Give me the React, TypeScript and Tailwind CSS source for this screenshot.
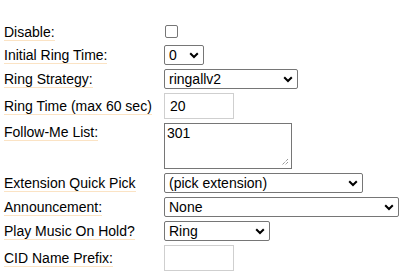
import type { ReactNode } from "react";

type RowProps = {
  label: string;
  top?: boolean;
  children: ReactNode;
};

function Row({ label, top = false, children }: RowProps) {
  return (
    <div className={top ? "flex items-start" : "flex items-center"}>
      <div className={top ? "w-[160px] shrink-0 pl-1 pt-[1px] leading-4" : "w-[160px] shrink-0 pl-1 leading-4"}>
        <span className="border-b border-[#fbe3c4]">{label}</span>
      </div>
      {children}
    </div>
  );
}

function Chevron() {
  return (
    <svg width="10" height="7" viewBox="0 0 10 7" className="pointer-events-none absolute right-[5px] top-[7px]">
      <path d="M1.2 1.2l3.8 3.8 3.8-3.8" fill="none" stroke="#000" strokeWidth="2" />
    </svg>
  );
}

function Select({ value, width }: { value: string; width: string }) {
  return (
    <div className={`relative ${width}`}>
      <select
        defaultValue={value}
        className="h-5 w-full appearance-none rounded-[2px] border border-[#767676] bg-white pl-1 pr-5 text-[14px] leading-[18px] text-black outline-none"
      >
        <option>{value}</option>
      </select>
      <Chevron />
    </div>
  );
}

const inputClassName =
  "ml-[4px] h-[26px] w-[70px] border border-[#cfcfcf] bg-white px-[5px] text-[14px] text-black outline-none";

export default function App() {
  return (
    <div className="flex w-[401px] flex-col gap-1 bg-white pt-[22px] text-[14px] leading-4 text-black [font-family:'Liberation_Sans',Arial,sans-serif]">
      <Row label="Disable:">
        <div className="flex h-[19px] items-center pl-[5px]">
          <span className="block h-[13px] w-[13px] rounded-[2px] border border-[#767676] bg-white" />
        </div>
      </Row>
      <Row label="Initial Ring Time:">
        <div className="pl-1">
          <Select value="0" width="w-[40px]" />
        </div>
      </Row>
      <Row label="Ring Strategy:">
        <div className="pl-1">
          <Select value="ringallv2" width="w-[134px]" />
        </div>
      </Row>
      <Row label="Ring Time (max 60 sec)">
        <input defaultValue="20" className={inputClassName} />
      </Row>
      <Row label="Follow-Me List:" top>
        <div className="relative ml-1 h-[46px] w-[128px] border border-[#767676] bg-white">
          <textarea
            defaultValue="301"
            className="block h-full w-full resize-none px-[2px] pt-[1px] text-[14px] leading-[16px] text-black outline-none"
          />
          <svg width="8" height="8" viewBox="0 0 8 8" className="pointer-events-none absolute bottom-[2px] right-[2px]">
            <path d="M7 1L1 7M7 4L4 7" stroke="#6b6b6b" strokeWidth="1" strokeDasharray="1 1" />
          </svg>
        </div>
      </Row>
      <Row label="Extension Quick Pick">
        <div className="pl-1">
          <Select value="(pick extension)" width="w-[199px]" />
        </div>
      </Row>
      <Row label="Announcement:">
        <div className="pl-1">
          <Select value="None" width="w-[235px]" />
        </div>
      </Row>
      <Row label="Play Music On Hold?">
        <div className="pl-1">
          <Select value="Ring" width="w-[106px]" />
        </div>
      </Row>
      <Row label="CID Name Prefix:">
        <input defaultValue="" className={inputClassName} />
      </Row>
    </div>
  );
}
